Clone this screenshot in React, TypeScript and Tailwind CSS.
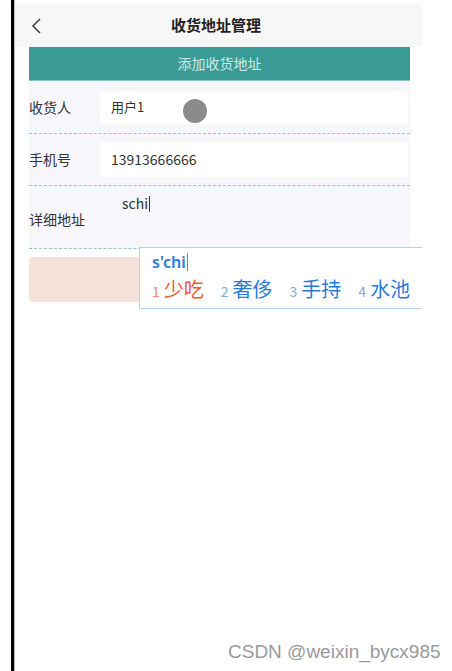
import React from "react";

const cjk = { fontFamily: '"Noto Sans CJK SC", "Noto Sans", sans-serif' };

export default function App() {
  return (
    <div className="relative flex h-[671px] w-[452px] overflow-hidden bg-white" style={cjk}>
      <div className="w-[11px] shrink-0" />
      <div className="w-[3px] shrink-0 bg-black" />
      <div className="w-[1px] shrink-0 bg-[#bdbdbd]" />
      <div className="flex w-[407px] shrink-0 flex-col">
        <div className="mt-[4px] flex h-[43px] items-center bg-[#f7f7f7]">
          <svg width="14" height="18" viewBox="0 0 14 18" className="ml-[15px]">
            <path d="M10 2 L3 9 L10 16" fill="none" stroke="#444" strokeWidth="1.6" />
          </svg>
          <div className="ml-[127px] text-[15px] font-bold text-[#222]">收货地址管理</div>
        </div>
        <div className="ml-[14px] w-[381px]">
          <div className="flex h-[34px] items-center justify-center border-b border-[#8cc5c1] bg-[#3a9b96] text-[14px] text-[#d2ebe9]">
            添加收货地址
          </div>
          <div className="bg-[#f7f6fb]">
            <div className="flex h-[53px] items-center border-b border-dashed border-[#8ec9c9]">
              <div className="w-[71px] text-[14px] text-[#333]">收货人</div>
              <div className="relative flex h-[33px] w-[308px] items-center rounded-[3px] bg-white pl-[11px] text-[13px] text-[#333]">
                用户1
                <div className="absolute left-[83px] top-[8px] h-[24px] w-[24px] rounded-full bg-[#8b8b8b]" />
              </div>
            </div>
            <div className="flex h-[52px] items-center border-b border-dashed border-[#8ec9c9]">
              <div className="w-[71px] text-[14px] text-[#333]">手机号</div>
              <div className="flex h-[35px] w-[308px] items-center rounded-[3px] bg-white pl-[11px] text-[14px] text-[#333]">
                13913666666
              </div>
            </div>
            <div className="relative flex h-[63px] items-center border-b border-dashed border-[#8ec9c9]">
              <div className="w-[71px] pt-[4px] text-[14px] text-[#333]">详细地址</div>
              <div className="absolute left-[93px] top-[7px] flex items-center text-[14px] text-[#333]">
                schi<span className="ml-[1px] inline-block h-[16px] w-[1px] bg-[#333]" />
              </div>
            </div>
          </div>
          <div className="mt-[8px] h-[45px] w-[381px] rounded-[4px] bg-[#f6e2da]" />
        </div>
      </div>
      <div className="absolute left-[139px] top-[247px] flex h-[62px] w-[283px] flex-col border border-r-0 border-[#b9d0ea] bg-white pl-[12px]">
        <div className="mt-[2px] flex items-center text-[16px] font-semibold text-[#2b7bd6]" style={{ fontFamily: '"Noto Sans", sans-serif' }}>
          s'chi<span className="ml-[1px] inline-block h-[18px] w-[1px] bg-[#e0613c]" />
        </div>
        <div className="mt-[2px] flex items-baseline whitespace-nowrap text-[20px] leading-[25px]">
          <span className="text-[14px] text-[#ef8a66]">1</span>
          <span className="ml-[4px] text-[#ea5b2e]">少吃</span>
          <span className="ml-[17px] text-[14px] text-[#7aaee4]">2</span>
          <span className="ml-[4px] text-[#2b7bd6]">奢侈</span>
          <span className="ml-[17px] text-[14px] text-[#7aaee4]">3</span>
          <span className="ml-[4px] text-[#2b7bd6]">手持</span>
          <span className="ml-[17px] text-[14px] text-[#7aaee4]">4</span>
          <span className="ml-[4px] text-[#2b7bd6]">水池</span>
        </div>
      </div>
      <div
        className="absolute left-[228px] top-[640px] text-[19px] leading-[24px] text-[#9a9a9a]"
        style={{ fontFamily: '"Liberation Sans", Arial, sans-serif' }}
      >
        CSDN @weixin_bycx985
      </div>
    </div>
  );
}
